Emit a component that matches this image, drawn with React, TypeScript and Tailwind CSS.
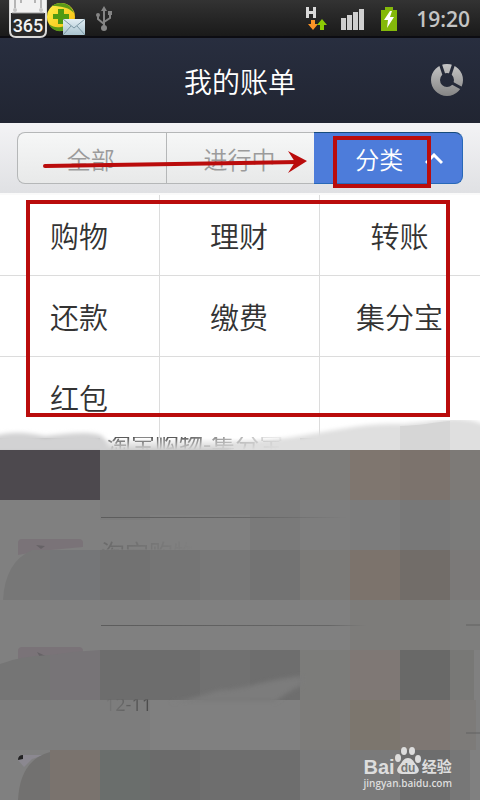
import { useState } from "react";

const tabs = ["全部", "进行中"];

const categories = ["购物", "理财", "转账", "还款", "缴费", "集分宝", "红包", "", ""];

// x, y, width, height, colour of every mosaic block over the bill list
const blocks: [number, number, number, number, string][] = [
  [0, 30, 100, 50, "#4d494e"],
  [100, 30, 50, 50, "#787878"],
  [150, 30, 150, 50, "#7c7c7c"],
  [300, 30, 50, 50, "#7d7c7a"],
  [350, 30, 50, 50, "#7f766f"],
  [400, 30, 50, 50, "#7c736d"],
  [450, 30, 30, 50, "#7d7a77"],
  [100, 80, 50, 20, "#7c7c7c"],
  [150, 80, 100, 15, "#7d7d7d"],
  [250, 80, 50, 50, "#7a7a7a"],
  [300, 80, 50, 50, "#7e7e7e"],
  [350, 80, 50, 50, "#7c7c7c"],
  [400, 80, 50, 50, "#787878"],
  [450, 80, 30, 50, "#7b7b7a"],
  [50, 130, 50, 50, "#757678"],
  [100, 130, 50, 50, "#727272"],
  [150, 130, 50, 50, "#757575"],
  [200, 130, 50, 50, "#787878"],
  [250, 130, 50, 50, "#737373"],
  [300, 130, 50, 50, "#7b7a78"],
  [350, 130, 50, 50, "#7c736c"],
  [400, 130, 50, 50, "#726d69"],
  [450, 130, 30, 50, "#7b7978"],
  [350, 180, 100, 50, "#7d7c7a"],
  [450, 180, 30, 50, "#7e7e7d"],
  [100, 230, 100, 50, "#6d6d6d"],
  [200, 230, 50, 50, "#717171"],
  [250, 230, 50, 50, "#6e6e6e"],
  [300, 230, 50, 50, "#7c7c7a"],
  [350, 230, 50, 50, "#7f7875"],
  [400, 230, 50, 50, "#696968"],
  [450, 230, 24, 50, "#787876"],
  [0, 280, 150, 50, "#7d7d7d"],
  [300, 280, 50, 50, "#7d7c7a"],
  [350, 280, 50, 50, "#7c766e"],
  [400, 280, 50, 50, "#7e7773"],
  [450, 280, 26, 50, "#7d7b79"],
  [50, 330, 50, 50, "#7a736e"],
  [100, 330, 50, 50, "#6a6e6c"],
  [150, 330, 50, 50, "#6b6b6b"],
  [200, 330, 100, 50, "#6e6e6e"],
  [300, 330, 100, 50, "#7a7a7a"],
  [400, 330, 50, 50, "#6d6d6d"],
  [450, 330, 20, 50, "#777777"],
];

function StatusBar() {
  return (
    <div className="flex h-[38px] items-center border-b-2 border-[#0c0c12] bg-gradient-to-b from-[#333333] to-[#1a1a1a] pl-[9px] pr-[10px]">
      <svg width="38" height="38" viewBox="0 0 38 38" className="shrink-0 self-start">
        <path d="M1 -2h36v33q0 6-6 6H7q-6 0-6-6z" fill="#292929" stroke="#d8d8d8" strokeWidth="2" />
        <path d="M1 0h36v13H1z" fill="#f1f1f1" />
        <path d="M3 13h32" stroke="#9a9a9a" />
        <circle cx="6" cy="10" r="2" fill="#c4c4c4" />
        <circle cx="32" cy="10" r="2" fill="#c4c4c4" />
        <path d="M6 0v8M32 0v8M12 0v3M26 0v3" stroke="#b5b5b5" strokeWidth="2" />
        <text x="19" y="32" textAnchor="middle" fontSize="18" fontWeight="500" fill="#f4f4f4" fontFamily="Roboto, sans-serif">
          365
        </text>
      </svg>
      <svg width="39" height="38" viewBox="0 0 39 38" className="shrink-0 self-start">
        <defs>
          <linearGradient id="ball" x1="0" y1="0" x2="1" y2="1">
            <stop offset="0" stopColor="#fdf24a" />
            <stop offset="1" stopColor="#f7b80c" />
          </linearGradient>
          <linearGradient id="mail" x1="0" y1="0" x2="0" y2="1">
            <stop offset="0" stopColor="#e3eef4" />
            <stop offset="1" stopColor="#a9c3cf" />
          </linearGradient>
        </defs>
        <circle cx="14" cy="17" r="14" fill="url(#ball)" />
        <path d="M5 6C12 1 23 2 27 13c-5-5-11-7-22-7z" fill="#5c9a18" />
        <path d="M2 24c5 4 9 4 16 2v4C11 33 5 30 2 24z" fill="#5c9a18" />
        <path d="M11 9h6v5h5v5h-5v5h-6v-5H6v-5h5z" fill="#4f9a12" />
        <rect x="16" y="19" width="22" height="16" fill="url(#mail)" />
        <path d="M16 19l11 9 11-9M16 35l8-9M38 35l-8-9" fill="none" stroke="#7d98a5" />
      </svg>
      <svg width="16" height="26" viewBox="0 0 16 26" className="ml-[10px] mt-[2px] shrink-0" fill="none" stroke="#858585" strokeWidth="2">
        <path d="M8 4v17M2 9v4l6 5M14 7v5l-6 4" />
        <circle cx="8" cy="22" r="3" fill="#858585" stroke="none" />
        <circle cx="2" cy="9" r="2" fill="#858585" stroke="none" />
        <path d="M12 5h4v4h-4zM8 0l3 5H5z" fill="#858585" stroke="none" />
      </svg>
      <div className="ml-auto flex items-center pt-[2px]">
        <svg width="22" height="26" viewBox="0 0 22 26">
          <path d="M1 1h3v4h4V1h3v11H8V8H4v4H1z" fill="#d9d9d9" />
          <path d="M6 14h4v4h3l-5 6-5-6h3z" fill="#fb9327" />
          <path d="M15 24h4v-5h3l-5-6-5 6h3z" fill="#8ccb05" />
        </svg>
        <svg width="24" height="22" viewBox="0 0 24 22" fill="#cfcfcf" className="ml-[13px]">
          <path d="M1 10h5v12H1zM7 7h5v15H7zM13 4h5v18h-5zM19 1h5v21h-5z" />
        </svg>
        <svg width="18" height="26" viewBox="0 0 18 26" className="ml-[16px]">
          <path d="M1 4h4V1h8v3h4v21H1z" fill="#84b90a" />
          <path d="M10 5L4 14h4l-1 8 7-11h-4l2-6z" fill="#fff" />
        </svg>
        <span className="ml-[18px] font-['Open_Sans',sans-serif] text-[21px] font-semibold leading-[26px] text-[#c4c4c4]">
          19:20
        </span>
      </div>
    </div>
  );
}

function Header() {
  return (
    <header className="relative flex h-[85px] items-center justify-center bg-gradient-to-b from-[#282e3f] to-[#212532]">
      <h1 className="text-[28px] font-[350] text-white">我的账单</h1>
      <button aria-label="统计" className="absolute right-4 top-[25px]">
        <svg width="34" height="34" viewBox="0 0 34 34">
          <defs>
            <linearGradient id="ring" x1="0" y1="0" x2="0" y2="1">
              <stop offset="0" stopColor="#c6c6c6" />
              <stop offset="1" stopColor="#858585" />
            </linearGradient>
          </defs>
          <path
            d="M17 1a16 16 0 1 1 0 32 16 16 0 1 1 0-32zM17 10a7 7 0 1 0 0 14 7 7 0 1 0 0-14z"
            fill="url(#ring)"
            fillRule="evenodd"
          />
          <path d="M10 0l4 12M24 0l-4 12M22 20l11 6" stroke="#252a39" strokeWidth="3" />
        </svg>
      </button>
    </header>
  );
}

function FilterBar({ open, onToggle }: { open: boolean; onToggle: () => void }) {
  return (
    <nav className="grid h-[72px] grid-cols-3 border-b-2 border-[#fafafa] bg-gradient-to-b from-[#f3f3f5] to-[#e0e1e4] px-[17px] py-[9px] text-2xl font-[350]">
      {tabs.map((tab) => (
        <button
          key={tab}
          className="border border-r-0 border-[#b5b7b8] bg-gradient-to-b from-[#f6f7f7] to-[#e8e9e9] pr-[2px] pt-px text-[#9b9b9b] first:rounded-l-lg"
        >
          {tab}
        </button>
      ))}
      <button
        onClick={onToggle}
        aria-expanded={open}
        className="flex items-center rounded-r-lg border border-l-0 border-[#2868b8] border-t-[#164a7c] bg-[#4d7cda] pl-[41px] pt-px text-white"
      >
        分类
        <svg width="18" height="12" viewBox="0 0 18 12" className="ml-[22px]" fill="none" stroke="#fff" strokeWidth="3">
          <path d="M1 10l8-8 8 8" />
        </svg>
      </button>
    </nav>
  );
}

function CategoryGrid() {
  return (
    <div className="grid grid-cols-3 bg-white text-[29px] font-[350] text-[#333333]">
      {categories.map((name, i) => (
        <div key={i} className="h-[81px] border-b border-r border-[#dcdcdc] nth-[3n]:border-r-0 nth-[n+7]:border-b-0">
          {name && <button className="h-full w-full pr-px pt-px">{name}</button>}
        </div>
      ))}
    </div>
  );
}

function Mosaic() {
  return (
    <svg className="absolute inset-x-0 -top-[18px] h-[380px] w-full" viewBox="0 0 480 380" preserveAspectRatio="none">
      <defs>
        <filter id="soft" x="-5%" y="-20%" width="110%" height="140%">
          <feGaussianBlur stdDeviation="2" />
        </filter>
        <linearGradient id="fade" x1="0" y1="0" x2="0" y2="1">
          <stop offset="0" stopColor="#fff" />
          <stop offset="1" stopColor="#cfcfcf" />
        </linearGradient>
        <clipPath id="top">
          <path d="M0-10h480v40H0z" />
        </clipPath>
      </defs>
      <g clipPath="url(#top)">
        <path d="M100 18h200v12H100z" fill="url(#fade)" />
        <path d="M-10 17C10 11 25 12 45 16 65 14 85 11 100 15c6 3 8 8 8 18H-10z" fill="#d2d2d3" filter="url(#soft)" />
        <path d="M230 24C300 20 340 5 390 4 420 5 445-3 460-1c15 1 20 4 30 8v30H230z" fill="#dfdfdf" filter="url(#soft)" />
        <path d="M400 6c18 0 35-4 50-5v30h-50z" fill="#d6d6d6" />
      </g>
      <path d="M0 30h480v350H0z" fill="#808080" />
      {/* thumbnails */}
      <path d="M18 135v-12q0-4 4-4h57q4 0 4 4v4L40 131z" fill="#7a7378" />
      <path d="M18 244v-13q0-4 4-4h57q4 0 4 4v3L40 242z" fill="#7a7378" />
      <path d="M37 232l17 8-12-3 2 7z" fill="#666266" />
      <path d="M36 125l9 1-4 3z" fill="#666266" />
      <path d="M18 340q0-5 4-5h22l-12 4-8 8z" fill="#8b8890" />
      <path d="M18 340q0-5 5-5v4z" fill="#222222" />
      {/* smeared edges */}
      <path d="M50 130H32Q5 142 3 180h47z" fill="#777777" />
      <path d="M0 244Q20 236 50 235v45H0z" fill="#757575" />
      <path d="M50 280v-45q25-4 50-5v50z" fill="#777477" />
      <path d="M50 332Q20 340 18 380h32z" fill="#727170" />
      {blocks.map(([x, y, w, h, fill]) => (
        <rect key={`${x}-${y}`} x={x} y={y} width={w} height={h} fill={fill} />
      ))}
      <path d="M170 282C200 280 215 268 228 270c25-4 50-12 74-14v10c-12 4-18 10-28 16z" fill="#7c7c7c" filter="url(#soft)" />
      <path d="M466 205h14M466 313h14" stroke="#636363" />
    </svg>
  );
}

function BillList() {
  return (
    <section className="relative flex-1 bg-[#808080]">
      <Mosaic />
      <ul className="relative pl-[101px] text-2xl text-transparent">
        <li className="-mt-[7px] flex h-[87px] flex-col">
          <div className="bg-[linear-gradient(to_bottom,transparent_6px,#555555_6px,#bbbbbb_16px,transparent_19px)] bg-clip-text pl-[6px] leading-[24px] [mask-image:linear-gradient(to_right,black_20%,transparent_50%)]">
            淘宝购物-集分宝
          </div>
          <div className="mt-auto h-px bg-gradient-to-r from-[#5c5c5c] via-[#666666] via-40% to-transparent to-65%" />
        </li>
        <li className="flex h-[108px] flex-col pt-[22px]">
          <div className="bg-[linear-gradient(to_bottom,#696969_9px,transparent_10px)] bg-clip-text leading-[24px] [mask-image:linear-gradient(to_right,black,transparent_24%)]">
            淘宝购物
          </div>
          <div className="mt-auto h-px bg-gradient-to-r from-[#5c5c5c] via-[#666666] via-60% to-transparent to-70%" />
        </li>
        <li className="h-[108px] pt-[68px]">
          <div className="bg-[linear-gradient(to_bottom,transparent_5px,#4c4c4c_6px)] bg-clip-text pl-1 font-['Open_Sans',sans-serif] text-lg leading-[20px] [mask-image:linear-gradient(to_right,transparent,black_12%)]">
            12-11
          </div>
        </li>
      </ul>
      <div className="absolute bottom-[10px] right-[28px] text-[#dddddd]">
        <div className="flex items-end">
          <span className="font-['Liberation_Sans',sans-serif] text-xl font-bold leading-[18px]">Bai</span>
          <svg width="26" height="30" viewBox="0 0 26 30" fill="#dddddd">
            <ellipse cx="3" cy="12" rx="3" ry="4" />
            <ellipse cx="9" cy="5" rx="3" ry="4" />
            <ellipse cx="17" cy="5" rx="3" ry="4" />
            <ellipse cx="23" cy="13" rx="3" ry="4" />
            <path d="M13 12c5 0 6 5 9 8 4 5 1 8-4 8H8c-5 0-8-3-4-8 3-3 4-8 9-8z" />
            <text x="13" y="26" textAnchor="middle" fontSize="12" fontWeight="700" fill="#777777" fontFamily="Liberation Sans, sans-serif">
              du
            </text>
          </svg>
          <span className="ml-px text-[15px] font-bold leading-[20px]">经验</span>
        </div>
        <a href="#" className="block font-['Open_Sans',sans-serif] text-[10px] font-semibold leading-[14px]">
          jingyan.baidu.com
        </a>
      </div>
    </section>
  );
}

function Annotations() {
  return (
    <svg
      className="pointer-events-none absolute inset-x-0 top-0 h-[420px] w-full"
      viewBox="0 0 480 420"
      preserveAspectRatio="none"
      fill="none"
      stroke="#ba0c0c"
      strokeWidth="4"
    >
      <rect x="28" y="202" width="420" height="213" />
      <rect x="335" y="138" width="94" height="48" />
      <path d="M45 166L298 162" strokeLinecap="round" />
      <path d="M288 151l19 10-19 12 7-11z" fill="#ba0c0c" stroke="none" />
    </svg>
  );
}

export default function App() {
  const [open, setOpen] = useState(true);

  return (
    <div className="relative flex min-h-screen flex-col overflow-hidden font-['Noto_Sans_CJK_SC',sans-serif]">
      <StatusBar />
      <Header />
      <FilterBar open={open} onToggle={() => setOpen(!open)} />
      {open && <CategoryGrid />}
      <BillList />
      <Annotations />
    </div>
  );
}
